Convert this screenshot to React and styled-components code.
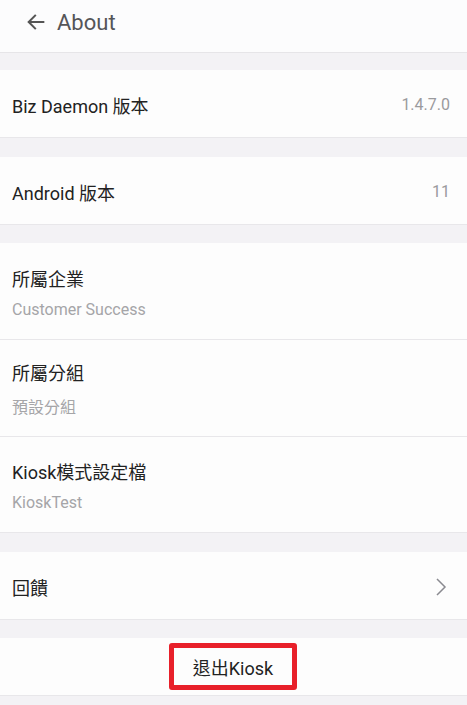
import React from "react";
import styled, { createGlobalStyle } from "styled-components";

const Global = createGlobalStyle`
  html, body { margin: 0; padding: 0; background: #f3f2f5; }
  body { font-family: Roboto, "Noto Sans CJK TC", sans-serif; }
`;

const Page = styled.div`
  width: 467px;
  min-height: 705px;
  background: #f3f2f5;
  display: flex;
  flex-direction: column;
`;

const Header = styled.div`
  height: 53px;
  box-sizing: border-box;
  background: #fcfcfd;
  border-bottom: 1px solid #e6e5e8;
  display: flex;
  align-items: center;
  padding: 0 0 8px 25px;
  gap: 10px;
  color: #555;
`;

const Title = styled.div`
  font-size: 22px;
  color: #555558;
`;

const Section = styled.div`
  margin-top: ${(p) => p.$gap}px;
  background: #fdfdfd;
  display: flex;
  flex-direction: column;
`;

const Row = styled.div`
  height: ${(p) => p.$h}px;
  box-sizing: border-box;
  border-bottom: 1px solid #e8e7ea;
  display: flex;
  align-items: center;
  justify-content: space-between;
  padding: 2px ${(p) => p.$pr || 17}px 0 12px;
`;

const Stack = styled.div`
  display: flex;
  flex-direction: column;
  gap: 9px;
  padding-bottom: 1px;
`;

const Label = styled.div`
  font-size: 18px;
  color: #222;
`;

const Sub = styled.div`
  font-size: 16px;
  color: #a5a5a8;
`;

const Value = styled.div`
  font-size: 16px;
  color: #9a9a9d;
`;

const ExitRow = styled.div`
  height: 58px;
  box-sizing: border-box;
  border-bottom: 1px solid #e8e7ea;
  display: flex;
  align-items: center;
  justify-content: center;
`;

const ExitBox = styled.div`
  width: 128px;
  height: 47px;
  box-sizing: border-box;
  border: 5px solid #e8202a;
  border-radius: 3px;
  display: flex;
  align-items: center;
  justify-content: center;
  font-size: 18px;
  color: #222;
  margin-left: -1px;
`;

const Arrow = () => (
  <svg width="22" height="22" viewBox="0 0 24 24" fill="none" stroke="#555" strokeWidth="2.2" strokeLinecap="square">
    <path d="M20 12H5" />
    <path d="M11 5l-7 7 7 7" strokeLinecap="square" strokeLinejoin="miter" />
  </svg>
);

const Chevron = () => (
  <svg width="12" height="20" viewBox="0 0 12 20" fill="none" stroke="#8a8a90" strokeWidth="1.5">
    <path d="M2 2l8 8-8 8" />
  </svg>
);

export default function App() {
  return (
    <>
      <Global />
      <Page>
        <Header>
          <Arrow />
          <Title>About</Title>
        </Header>
        <Section $gap={17}>
          <Row $h={68}>
            <Label>Biz Daemon 版本</Label>
            <Value>1.4.7.0</Value>
          </Row>
        </Section>
        <Section $gap={19}>
          <Row $h={68}>
            <Label>Android 版本</Label>
            <Value>11</Value>
          </Row>
        </Section>
        <Section $gap={18}>
          <Row $h={97}>
            <Stack>
              <Label>所屬企業</Label>
              <Sub>Customer Success</Sub>
            </Stack>
          </Row>
          <Row $h={97}>
            <Stack>
              <Label>所屬分組</Label>
              <Sub>預設分組</Sub>
            </Stack>
          </Row>
          <Row $h={96}>
            <Stack>
              <Label>Kiosk模式設定檔</Label>
              <Sub>KioskTest</Sub>
            </Stack>
          </Row>
        </Section>
        <Section $gap={19}>
          <Row $h={68} $pr={20}>
            <Label>回饋</Label>
            <Chevron />
          </Row>
        </Section>
        <Section $gap={18}>
          <ExitRow>
            <ExitBox>退出Kiosk</ExitBox>
          </ExitRow>
        </Section>
      </Page>
    </>
  );
}
